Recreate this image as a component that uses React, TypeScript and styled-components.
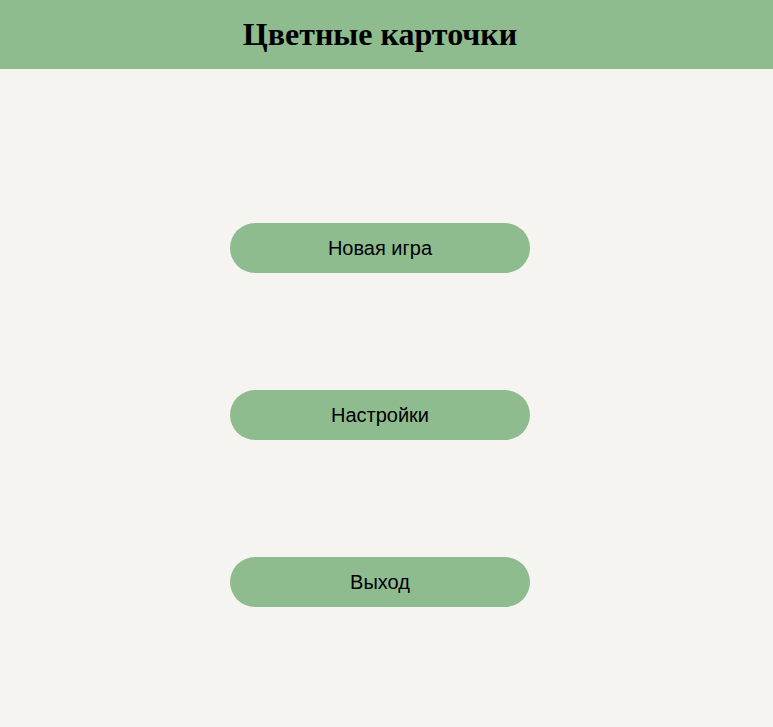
import React from "react";
import styled, { createGlobalStyle } from "styled-components";

const Global = createGlobalStyle`
  html, body { margin: 0; padding: 0; background: #f5f4f0; }
  body { font-family: "Liberation Serif", serif; }
`;

const Header = styled.header`
  height: 69px;
  background: #8fbc8f;
  display: flex;
  align-items: center;
`;

const Inner = styled.div`
  width: 760px;
  display: flex;
  justify-content: center;
`;

const Title = styled.h1`
  margin: 0;
  font-family: "Liberation Serif", serif;
  font-weight: bold;
  font-size: 32px;
  color: #000;
`;

const Menu = styled.main`
  width: 760px;
  display: flex;
  flex-direction: column;
  align-items: center;
  gap: 117px;
  padding-top: 154px;
`;

const MenuButton = styled.button`
  width: 300px;
  height: 50px;
  border: none;
  border-radius: 25px;
  background: #8fbc8f;
  color: #000;
  font-family: "Liberation Sans", Arial, sans-serif;
  font-size: 20px;
  cursor: pointer;
`;

export default function App() {
  return (
    <>
      <Global />
      <Header>
        <Inner>
          <Title>Цветные карточки</Title>
        </Inner>
      </Header>
      <Menu>
        <MenuButton>Новая игра</MenuButton>
        <MenuButton>Настройки</MenuButton>
        <MenuButton>Выход</MenuButton>
      </Menu>
    </>
  );
}
